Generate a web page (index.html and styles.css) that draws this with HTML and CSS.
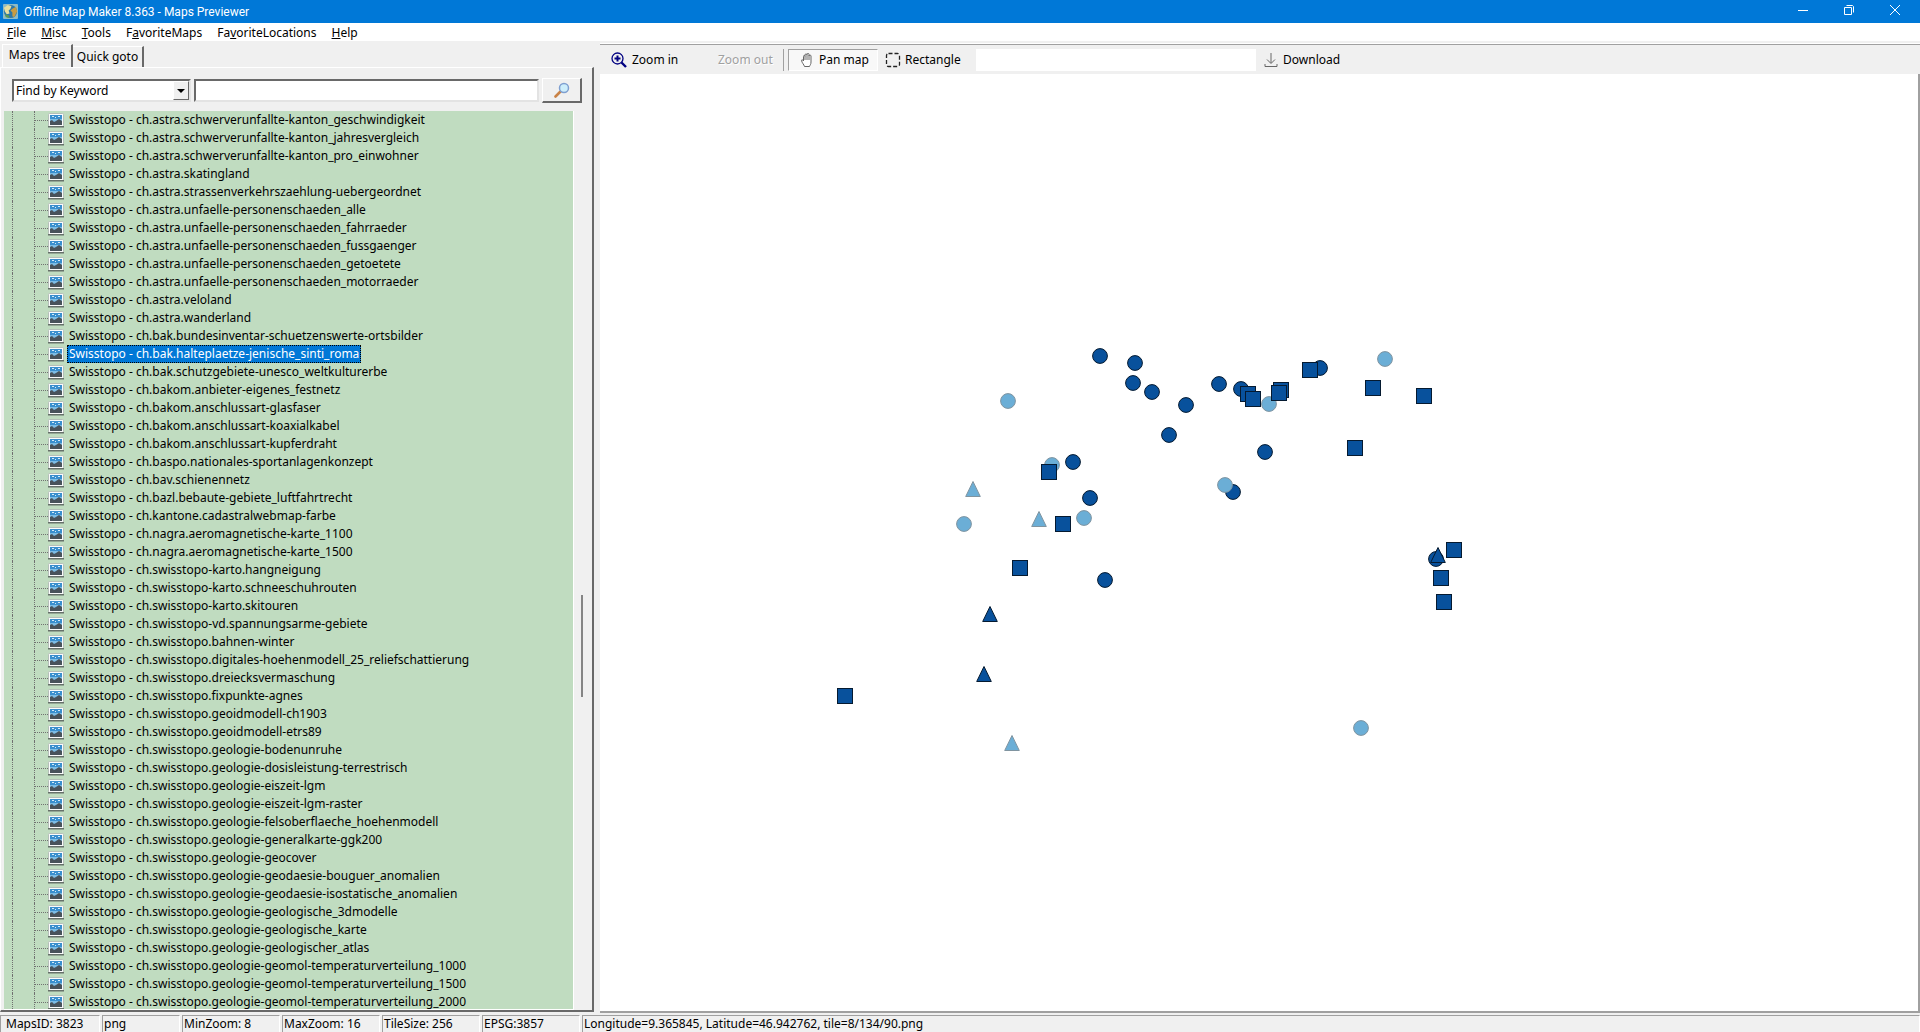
FILE: index.html
```html
<!DOCTYPE html>
<html lang="en">
<head>
  <meta charset="UTF-8" />
  <meta name="viewport" content="width=device-width, initial-scale=1.0"/>
  <title>Offline Map Maker 8.363 - Maps Previewer</title>
  <link rel="stylesheet" href="styles.css">
</head>
<body>

<!-- shared icon shapes -->
<svg class="defs" aria-hidden="true">
  <symbol id="mapIcon" viewBox="0 0 16 15">
    <rect x="0.5" y="0.5" width="15" height="13" rx="1" fill="#fafbfb" stroke="#b4beb8"/>
    <rect x="0" y="13" width="16" height="1.5" fill="#66706a"/>
    <rect x="2" y="2" width="12" height="10" fill="#3a8fce"/>
    <path d="M2 6h12v3H2z" fill="#7dbce4"/>
    <path d="M4 3h2v1H4zM7 4h1v1H7zM10 3h2v1h-2z" fill="#d4ecfa"/>
    <path d="M2 8l2-1 2 2 2-1 3-2 3 2v4H2z" fill="#48525a"/>
  </symbol>
  <symbol id="circle" viewBox="-9 -9 18 18"><circle r="7.4"/></symbol>
  <symbol id="square" viewBox="-9 -9 18 18"><rect x="-7.5" y="-7.5" width="15" height="15"/></symbol>
  <symbol id="triangle" viewBox="-9 -9 18 18"><path d="M0-7.5L7.3 7.5H-7.3z"/></symbol>
</svg>

<header class="titlebar">
  <svg class="app-icon" viewBox="0 0 16 16">
    <rect width="16" height="16" rx="1" fill="#8dbbc6"/>
    <circle cx="8" cy="8" r="7" fill="#2d78a8"/>
    <path d="M1 4l4-3 4 1-1 3-2 2 1 3-3 1-2-3z" fill="#e6dfa0"/>
    <path d="M10 5l4-2 1 5-3 6-2-1 0-4-2-2z" fill="#c79c43"/>
    <path d="M2 11l4 1 1 3-4-1z" fill="#5a9a55"/>
  </svg>
  <h1>Offline Map Maker 8.363 - Maps Previewer</h1>
  <div class="window-buttons">
    <button type="button" aria-label="Minimize"><svg viewBox="0 0 12 12"><path d="M1 6.5h10"/></svg></button>
    <button type="button" aria-label="Restore"><svg viewBox="0 0 12 12"><path d="M1.500 3.500h7v7h-7zM3.500 1.500h6l1 1v6"/></svg></button>
    <button type="button" aria-label="Close"><svg viewBox="0 0 12 12"><path d="M1 1l10 10M11 1L1 11"/></svg></button>
  </div>
</header>

<nav class="menubar">
  <a href="#"><u>F</u>ile</a>
  <a href="#"><u>M</u>isc</a>
  <a href="#"><u>T</u>ools</a>
  <a href="#">F<u>a</u>voriteMaps</a>
  <a href="#">Fa<u>v</u>oriteLocations</a>
  <a href="#"><u>H</u>elp</a>
</nav>

<main>
  <section class="side">
    <div class="tabs">
      <button type="button" class="tab active">Maps tree</button>
      <button type="button" class="tab">Quick goto</button>
    </div>
    <div class="panel">
      <form class="search">
        <div class="select-box">
          <select aria-label="Search mode">
            <option>Find by Keyword</option>
          </select>
          <span class="arrow"></span>
        </div>
        <input type="text" class="keyword" aria-label="Keyword">
        <button type="button" class="find" aria-label="Find">
          <svg viewBox="0 0 16 16">
            <path d="M1.500 14.500l5-5" stroke="#c98246" stroke-width="2.600" stroke-linecap="round"/>
            <circle cx="10" cy="6" r="4.500" fill="#cdeefb" stroke="#7f9fd0" stroke-width="1.500"/>
          </svg>
        </button>
      </form>
      <div class="tree-wrap">
        <ul class="tree" id="tree"></ul>
        <div class="scroll"></div>
      </div>
    </div>
  </section>

  <section class="view">
    <div class="toolbar">
      <button type="button" class="tool zoom-in">
        <svg viewBox="0 0 16 16" stroke="#000080" fill="none">
          <circle cx="6.500" cy="6.500" r="5.500" stroke-width="1.300"/>
          <path d="M3.500 6.500h6M6.500 3.500v6" stroke-width="2"/>
          <path d="M10.500 10.500l4.500 4.500" stroke-width="2.400"/>
        </svg>
        Zoom in
      </button>
      <button type="button" class="tool zoom-out" disabled>Zoom out</button>
      <span class="separator"></span>
      <button type="button" class="tool pan">
        <svg viewBox="0 0 16 16" stroke="#666" fill="#fff">
          <path d="M4.500 9V4.500c0-1.500 1.500-1.500 1.500 0V3c0-1.500 2-1.500 2 0v-.5c0-1.500 2-1.500 2 0V4c0-1.300 2-1.300 2 0v6c0 2.500-1 3-1.500 4.500h-5C5 12.500 3 11 2.500 8.500c0-1 1-1 2 .5z"/>
          <path d="M6 4.500V8M8 3v5M10 3.500V8" fill="none"/>
        </svg>
        Pan map
      </button>
      <button type="button" class="tool rect">
        <svg viewBox="0 0 16 16" stroke="#222" fill="none">
          <rect x="1.500" y="1.500" width="13" height="13" rx="2" stroke-width="1.300" stroke-dasharray="4 2"/>
        </svg>
        Rectangle
      </button>
      <input type="text" class="info" aria-label="Selection">
      <button type="button" class="tool download">
        <svg viewBox="0 0 16 16" stroke="#666" fill="none">
          <path d="M8 1v10M4 7.500l4 4 4-4M2 12v2.500h12V12"/>
        </svg>
        Download
      </button>
    </div>
    <svg class="map" id="map" role="img" aria-label="Map preview"></svg>
  </section>
</main>

<footer class="statusbar">
  <span class="first">MapsID: 3823</span>
  <span class="type">png</span>
  <span>MinZoom: 8</span>
  <span>MaxZoom: 16</span>
  <span>TileSize: 256</span>
  <span>EPSG:3857</span>
  <span class="position">Longitude=9.365845, Latitude=46.942762, tile=8/134/90.png</span>
</footer>

<script>
  const maps = [
    "astra.schwerverunfallte-kanton_geschwindigkeit",
    "astra.schwerverunfallte-kanton_jahresvergleich",
    "astra.schwerverunfallte-kanton_pro_einwohner",
    "astra.skatingland",
    "astra.strassenverkehrszaehlung-uebergeordnet",
    "astra.unfaelle-personenschaeden_alle",
    "astra.unfaelle-personenschaeden_fahrraeder",
    "astra.unfaelle-personenschaeden_fussgaenger",
    "astra.unfaelle-personenschaeden_getoetete",
    "astra.unfaelle-personenschaeden_motorraeder",
    "astra.veloland",
    "astra.wanderland",
    "bak.bundesinventar-schuetzenswerte-ortsbilder",
    "bak.halteplaetze-jenische_sinti_roma",
    "bak.schutzgebiete-unesco_weltkulturerbe",
    "bakom.anbieter-eigenes_festnetz",
    "bakom.anschlussart-glasfaser",
    "bakom.anschlussart-koaxialkabel",
    "bakom.anschlussart-kupferdraht",
    "baspo.nationales-sportanlagenkonzept",
    "bav.schienennetz",
    "bazl.bebaute-gebiete_luftfahrtrecht",
    "kantone.cadastralwebmap-farbe",
    "nagra.aeromagnetische-karte_1100",
    "nagra.aeromagnetische-karte_1500",
    "swisstopo-karto.hangneigung",
    "swisstopo-karto.schneeschuhrouten",
    "swisstopo-karto.skitouren",
    "swisstopo-vd.spannungsarme-gebiete",
    "swisstopo.bahnen-winter",
    "swisstopo.digitales-hoehenmodell_25_reliefschattierung",
    "swisstopo.dreiecksvermaschung",
    "swisstopo.fixpunkte-agnes",
    "swisstopo.geoidmodell-ch1903",
    "swisstopo.geoidmodell-etrs89",
    "swisstopo.geologie-bodenunruhe",
    "swisstopo.geologie-dosisleistung-terrestrisch",
    "swisstopo.geologie-eiszeit-lgm",
    "swisstopo.geologie-eiszeit-lgm-raster",
    "swisstopo.geologie-felsoberflaeche_hoehenmodell",
    "swisstopo.geologie-generalkarte-ggk200",
    "swisstopo.geologie-geocover",
    "swisstopo.geologie-geodaesie-bouguer_anomalien",
    "swisstopo.geologie-geodaesie-isostatische_anomalien",
    "swisstopo.geologie-geologische_3dmodelle",
    "swisstopo.geologie-geologische_karte",
    "swisstopo.geologie-geologischer_atlas",
    "swisstopo.geologie-geomol-temperaturverteilung_1000",
    "swisstopo.geologie-geomol-temperaturverteilung_1500",
    "swisstopo.geologie-geomol-temperaturverteilung_2000"
  ];
  const selected = "bak.halteplaetze-jenische_sinti_roma";

  document.getElementById("tree").innerHTML = maps.map(function (name) {
    const cls = name === selected ? "name selected" : "name";
    return `<li><svg class="icon"><use href="#mapIcon"/></svg><span class="${cls}">Swisstopo - ch.${name}</span></li>`;
  }).join("");

  // Markers in drawing order: shape, colour, x, y of the centre
  const markers = [
    ["circle", "dark", 500, 282], ["circle", "dark", 535, 289], ["circle", "dark", 533, 309],
    ["circle", "dark", 552, 318], ["circle", "dark", 586, 331], ["circle", "dark", 619, 310],
    ["circle", "dark", 641, 315], ["circle", "dark", 569, 361], ["circle", "dark", 665, 378],
    ["circle", "dark", 473, 388], ["circle", "dark", 490, 424], ["circle", "dark", 633, 418],
    ["circle", "dark", 720, 294], ["circle", "dark", 505, 506], ["circle", "dark", 836, 485],
    ["circle", "light", 408, 327], ["circle", "light", 785, 285], ["circle", "light", 669, 330],
    ["circle", "light", 452, 391], ["circle", "light", 625, 411], ["circle", "light", 364, 450],
    ["circle", "light", 484, 444], ["circle", "light", 761, 654],
    ["square", "dark", 710, 296], ["square", "dark", 773, 314], ["square", "dark", 824, 322],
    ["square", "dark", 648, 320], ["square", "dark", 653, 325], ["square", "dark", 681, 316],
    ["square", "dark", 679, 319], ["square", "dark", 755, 374], ["square", "dark", 449, 398],
    ["square", "dark", 463, 450], ["square", "dark", 420, 494], ["square", "dark", 854, 476],
    ["square", "dark", 841, 504], ["square", "dark", 844, 528], ["square", "dark", 245, 622],
    ["triangle", "light", 373, 415], ["triangle", "light", 439, 445], ["triangle", "light", 412, 669],
    ["triangle", "dark", 838, 481], ["triangle", "dark", 390, 540], ["triangle", "dark", 384, 600]
  ];

  document.getElementById("map").innerHTML = markers.map(function ([shape, color, x, y]) {
    return `<use href="#${shape}" class="${color}" x="${x - 9}" y="${y - 9}" width="18" height="18"/>`;
  }).join("");
</script>

</body>
</html>
```
FILE: styles.css
```css
* {
  box-sizing: border-box;
}

body {
  margin: 0;
  height: 100vh;
  display: flex;
  flex-direction: column;
  overflow: hidden;
  background: #f0f0f0;
  color: #000;
  font-family: "Noto Sans", sans-serif;
  font-size: 12px;
}

button, input, select {
  font: inherit;
  color: inherit;
  margin: 0;
  padding: 0;
  border: none;
  border-radius: 0;
  background: none;
}

.defs {
  display: none;
}

.titlebar {
  display: flex;
  align-items: center;
  flex: none;
  height: 23px;
  padding-left: 3px;
  background: #0078d7;
  color: #fff;
  font-family: Roboto, sans-serif;
}

.app-icon {
  width: 15px;
  height: 15px;
}

.titlebar h1 {
  flex: 1;
  margin: 0 0 0 6px;
  font-size: 12px;
  font-weight: normal;
}

.window-buttons {
  display: flex;
  padding-right: 2px;
}

.window-buttons button {
  width: 46px;
  height: 20px;
}

.window-buttons svg {
  width: 12px;
  height: 12px;
  fill: none;
  stroke: #fff;
}

.menubar {
  display: flex;
  align-items: center;
  flex: none;
  gap: 15px;
  height: 18px;
  padding-left: 7px;
  background: #fff;
}

.menubar a {
  color: #000;
  text-decoration: none;
}

main {
  display: flex;
  flex: 1;
  min-height: 0;
  padding-top: 2px;
}

.side {
  display: flex;
  flex-direction: column;
  flex: none;
  width: 600px;
  padding-right: 6px;
}

.tabs {
  display: flex;
  align-items: flex-end;
  height: 24px;
  padding-left: 2px;
}

.tab {
  width: 71px;
  height: 21px;
  padding-bottom: 2px;
  border-top: 1px solid #fff;
  border-right: 2px solid #696969;
}

.tab.active {
  height: 23px;
  padding-bottom: 4px;
  border-left: 1px solid #fff;
}

.panel {
  display: flex;
  flex-direction: column;
  flex: 1;
  min-height: 0;
  margin-bottom: 1px;
  padding: 10px 0 0 3px;
  border: 1px solid #fff;
  border-right: 2px solid #696969;
  border-bottom: 2px solid #696969;
}

.search {
  display: flex;
  align-items: center;
  gap: 3px;
  padding-left: 8px;
  margin-bottom: 8px;
}

.select-box {
  position: relative;
  width: 179px;
  height: 23px;
}

.select-box select {
  appearance: none;
  width: 100%;
  height: 100%;
  padding-left: 2px;
  background: #fff;
  border: 2px solid;
  border-color: #696969 #e3e3e3 #e3e3e3 #696969;
}

.arrow {
  position: absolute;
  top: 2px;
  right: 2px;
  width: 16px;
  height: 19px;
  background: #f0f0f0;
  border: 1px solid;
  border-color: #fff #696969 #696969 #fff;
  pointer-events: none;
}

.arrow::after {
  content: "";
  position: absolute;
  top: 7px;
  left: 3px;
  border: 4px solid transparent;
  border-top-color: #000;
  border-bottom: none;
}

.keyword {
  width: 345px;
  height: 23px;
  background: #fff;
  border: 2px solid;
  border-color: #696969 #e3e3e3 #e3e3e3 #696969;
}

.find {
  display: flex;
  align-items: center;
  justify-content: center;
  width: 40px;
  height: 25px;
  border: 1px solid #fff;
  border-right: 2px solid #696969;
  border-bottom: 2px solid #696969;
}

.find svg {
  width: 16px;
  height: 16px;
}

.tree-wrap {
  display: flex;
  flex: 1;
  min-height: 0;
}

.tree {
  width: 570px;
  margin: 0;
  padding: 0 0 0 8px;
  list-style: none;
  overflow: hidden;
  background: #c0dcc0;
  border-right: 1px solid #fff;
  border-bottom: 1px solid #fff;
}

.tree li {
  display: flex;
  align-items: center;
  height: 18px;
  border-left: 1px dotted #707070;
}

/* vertical and horizontal guide lines in front of the icon */
.tree li::before {
  content: "";
  width: 13px;
  height: 18px;
  margin-left: 21px;
  border-left: 1px dotted #707070;
  background: repeating-linear-gradient(90deg, #707070 0 1px, transparent 1px 2px) 0 9px / 100% 1px no-repeat;
}

.tree .icon {
  width: 16px;
  height: 15px;
  margin-right: 3px;
}

.tree .name {
  padding: 0 2px;
  line-height: 18px;
}

.tree .selected {
  color: #fff;
  background: #0078d7;
  outline: 1px dotted #000;
  outline-offset: -1px;
}

.scroll {
  flex: 1;
  display: flex;
  align-items: center;
  padding: 170px 0 0 7px;
}

.scroll::before {
  content: "";
  width: 2px;
  height: 102px;
  background: #858585;
}

.view {
  display: flex;
  flex-direction: column;
  flex: 1;
  min-width: 0;
  border-top: 1px solid #fff;
  border-bottom: 2px solid #a0a0a0;
}

.toolbar {
  display: flex;
  align-items: center;
  flex: none;
  height: 30px;
  padding-left: 11px;
  border-top: 1px solid #a0a0a0;
}

.tool {
  display: flex;
  align-items: center;
  gap: 4px;
  height: 22px;
  white-space: nowrap;
}

.tool svg {
  width: 16px;
  height: 16px;
}

.zoom-in {
  width: 107px;
  gap: 5px;
}

.zoom-out {
  width: 65px;
  color: #a0a0a0;
  text-shadow: 1px 1px #fff;
}

.separator {
  width: 1px;
  height: 22px;
  margin-right: 4px;
  background: #a0a0a0;
}

.pan {
  width: 90px;
  padding-left: 10px;
  background: #f8f8f8;
  border: 1px solid;
  border-color: #a0a0a0 #fff #fff #a0a0a0;
}

.rect {
  width: 98px;
  padding-left: 7px;
}

.info {
  width: 280px;
  height: 22px;
  background: #fff;
}

.download {
  padding-left: 7px;
}

.map {
  flex: 1;
  min-height: 0;
  width: 100%;
  background: #fff;
  border-right: 2px solid #a0a0a0;
}

.dark {
  fill: #08519c;
  stroke: #051a30;
}

.light {
  fill: #6baed6;
  stroke: #8094a0;
}

.statusbar {
  display: flex;
  flex: none;
  gap: 2px;
  height: 19px;
  padding-top: 2px;
}

.statusbar span {
  width: 98px;
  padding-left: 1px;
  line-height: 16px;
  white-space: nowrap;
  border-top: 1px solid #a0a0a0;
  border-left: 1px solid #a0a0a0;
  border-right: 1px solid #fff;
}

.statusbar .first {
  width: 100px;
  padding-left: 5px;
}

.statusbar .type {
  width: 78px;
}

.statusbar .position {
  flex: 1;
}

@media (max-width: 1200px) {
  .info {
    width: 120px;
  }
}
```
